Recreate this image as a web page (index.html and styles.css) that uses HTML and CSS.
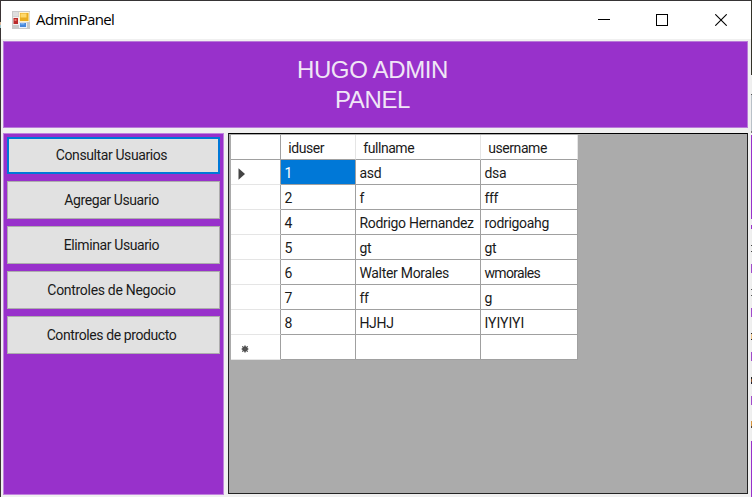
FILE: index.html
```html
<!DOCTYPE html>
<html lang="es">
<head>
<meta charset="utf-8">
<title>AdminPanel</title>
<link rel="stylesheet" href="styles.css">
</head>
<body>
<div class="desktop">
  <div class="window">
    <header class="titlebar">
      <svg class="app-icon" width="18" height="18" viewBox="0 0 18 18">
        <rect width="18" height="18" fill="#c9c9c9"/>
        <rect x="1" y="1" width="5.5" height="4.5" fill="#dedede"/>
        <rect x="1" y="6" width="6" height="8" fill="#f4eeee"/>
        <rect x="1.5" y="7" width="4.5" height="6" fill="#b92a2b"/>
        <rect x="2.5" y="8" width="2" height="2" fill="#e77b70"/>
        <rect x="7" y="1" width="10.5" height="10" fill="#fff4cf"/>
        <rect x="8" y="2" width="8.5" height="8" fill="#e9ad20"/>
        <rect x="8.5" y="2.5" width="6" height="4" fill="#ffd868"/>
        <rect x="7" y="11.5" width="8" height="5.5" fill="#eaf1fc"/>
        <rect x="8" y="12" width="6" height="4" fill="#4688dc"/>
        <rect x="8.5" y="12" width="4" height="1.5" fill="#83b5f0"/>
      </svg>
      <span class="caption">AdminPanel</span>
      <div class="controls">
        <svg width="12" height="12" viewBox="0 0 12 12"><path d="M0 5.5H12" stroke="#000"/></svg>
        <svg width="12" height="12" viewBox="0 0 12 12"><rect x=".5" y=".5" width="11" height="11" fill="none" stroke="#000"/></svg>
        <svg width="12" height="12" viewBox="0 0 12 12"><path d="M.3 .3L11.7 11.7M11.7 .3L.3 11.7" stroke="#000" stroke-width="1.1"/></svg>
      </div>
    </header>
    <h1 class="banner">HUGO ADMIN<br>PANEL</h1>
    <main class="content">
      <nav class="sidebar">
        <button class="btn focused">Consultar Usuarios</button>
        <button class="btn">Agregar Usuario</button>
        <button class="btn">Eliminar Usuario</button>
        <button class="btn wide">Controles de Negocio</button>
        <button class="btn">Controles de producto</button>
      </nav>
      <section class="grid">
        <div class="row head"><div class="mark"></div><div>iduser</div><div>fullname</div><div>username</div></div>
        <div class="row"><div class="mark"><svg width="7" height="12" viewBox="0 0 7 12"><path d="M.5 .3L7 6L.5 11.7Z" fill="#444"/></svg></div><div class="selected">1</div><div>asd</div><div>dsa</div></div>
        <div class="row"><div class="mark"></div><div>2</div><div>f</div><div>fff</div></div>
        <div class="row"><div class="mark"></div><div>4</div><div>Rodrigo Hernandez</div><div>rodrigoahg</div></div>
        <div class="row"><div class="mark"></div><div>5</div><div>gt</div><div>gt</div></div>
        <div class="row"><div class="mark"></div><div>6</div><div>Walter Morales</div><div class="tight">wmorales</div></div>
        <div class="row"><div class="mark"></div><div>7</div><div>ff</div><div>g</div></div>
        <div class="row"><div class="mark"></div><div>8</div><div>HJHJ</div><div class="loose">IYIYIYI</div></div>
        <div class="row"><div class="mark new"><svg width="8" height="8" viewBox="0 0 8 8"><circle cx="4" cy="4" r="2.8" fill="#444"/><path d="M4 .3V7.7M.5 4H7.5M1.2 1.2L6.8 6.8M6.8 1.2L1.2 6.8" stroke="#555"/></svg></div><div></div><div></div><div></div></div>
      </section>
    </main>
  </div>
</div>
</body>
</html>
```
FILE: styles.css
```css
* { box-sizing: border-box; }

body {
  margin: 0;
  overflow: hidden;
  font: 14px/17px Roboto, "Liberation Sans", sans-serif;
  letter-spacing: -.3px;
  color: #1a1a1a;
}

.desktop {
  width: 752px;
  height: 497px;
  padding: 1px 1px 0;
  background:
    linear-gradient(#3a3335 0 22px, #d9b79b 22px 25px, #9fc4c8 25px 28px, #3a3335 28px) left / 1px 100% no-repeat,
    linear-gradient(#333229 0 75px, #eee 75px 94px, #555 94px 95px, #b9c0c8 95px 131px, #777 131px 133px,
      #eee 133px 135px, #9831cb 135px 219px, #eee 219px 225px, #9831cb 225px 229px, #eee 229px 245px,
      #444 245px 246px, #eee 246px 251px, #444 251px 252px, #eee 252px 264px, #a04acb 264px 273px,
      #eee 273px 289px, #555 289px 290px, #eee 290px 295px, #555 295px 296px, #eee 296px 308px,
      #a04acb 308px 317px, #eee 317px 333px, #222 333px 334px, #edc48a 334px 339px, #222 339px 340px,
      #eee 340px 352px, #a04acb 352px 361px, #eee 361px 377px, #222 377px 379px, #8b512c 379px 382px,
      #223 382px 384px, #eee 384px 396px, #a04acb 396px 405px, #eee 405px 421px, #d8953f 421px 426px,
      #543 426px 428px, #eee 428px 441px, #9831cb 441px) right / 1px 100% no-repeat,
    #363435;
}

.window {
  height: 496px;
  padding: 0 2px 2px;
  background: #f0f0f0;
  display: flex;
  flex-direction: column;
}

.titlebar {
  height: 38px;
  margin: 0 -2px 2px;
  padding-left: 11px;
  background: #fff;
  display: flex;
  align-items: center;
}

.caption {
  margin-left: 6px;
  padding-bottom: 2px;
  font: 15px/20px "Open Sans", "Noto Sans", sans-serif;
  letter-spacing: -.6px;
  color: #000;
}

.controls {
  margin-left: auto;
  padding-right: 24px;
  display: flex;
  gap: 46px;
}
.controls svg { display: block; }
.controls svg:not(:last-child) { margin-left: -1px; margin-right: 1px; }

.banner {
  width: 745px;
  height: 87px;
  margin: 0 0 5px;
  padding: 13px 6px 0 0;
  border: 1px solid #b979d9;
  background: #9831cb;
  color: #f0e6f6;
  font: 24px/30px "Liberation Sans", sans-serif;
  letter-spacing: -.35px;
  text-align: center;
}

.content {
  height: 362px;
  display: grid;
  grid-template-columns: 221px 520px;
  gap: 4px;
}

.sidebar {
  padding: 3px 3px 0;
  border: 1px solid #c182de;
  background: #9831cb;
  display: flex;
  flex-direction: column;
  gap: 7px;
}

.btn {
  height: 38px;
  padding: 0 4px 0 0;
  border: 1px solid #adadad;
  background: #e1e1e1;
  font: inherit;
  letter-spacing: -.4px;
  color: #1a1a1a;
  text-align: center;
}
.focused {
  height: 37px;
  border: 2px solid #0078d7;
}
.wide { letter-spacing: -.3px; }

.grid {
  height: 361px;
  padding: 1px 0 0 2px;
  border: 1px solid #222;
  border-top-color: #000;
  background: #ababab;
}

.row {
  width: 347px;
  height: 25px;
  display: grid;
  grid-template-columns: 50px 75px 125px 97px;
  background: #fff;
}
.row > div {
  padding: 5px 0 0 3.4px;
  border-right: 1px solid #a0a0a0;
  border-bottom: 1px solid #a0a0a0;
  white-space: nowrap;
}
.row.head > div {
  padding-left: 7.3px;
  border-right-color: #e5e5e5;
  letter-spacing: -.45px;
}
.row > .mark {
  padding: 8px 0 0 7px;
  border-right-color: #a0a0a0;
  border-bottom-color: #e5e5e5;
}
.row.head > .mark { border-color: #a0a0a0; }
.row > .new { padding: 10px 0 0 10px; }
.mark svg { display: block; }
.row > .tight { letter-spacing: -.65px; }
.row > .loose { letter-spacing: 0; }
.row > .selected { background: #0078d7; color: #fff; }
```
